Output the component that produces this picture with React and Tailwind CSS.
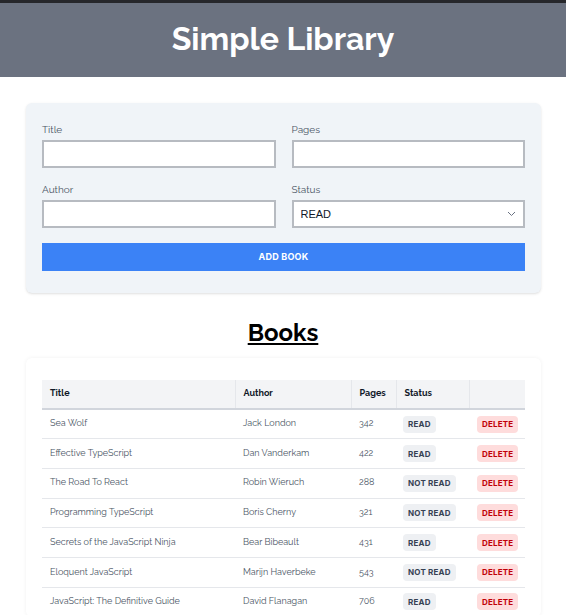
import React from "react";

const books = [
  { title: "Sea Wolf", author: "Jack London", pages: 342, read: true },
  { title: "Effective TypeScript", author: "Dan Vanderkam", pages: 422, read: true },
  { title: "The Road To React", author: "Robin Wieruch", pages: 288, read: false },
  { title: "Programming TypeScript", author: "Boris Cherny", pages: 321, read: false },
  { title: "Secrets of the JavaScript Ninja", author: "Bear Bibeault", pages: 431, read: true },
  { title: "Eloquent JavaScript", author: "Marijn Haverbeke", pages: 543, read: false },
  { title: "JavaScript: The Definitive Guide", author: "David Flanagan", pages: 706, read: true },
];

const inputCls = "w-full h-[28px] bg-white border-2 border-[#b7bbc1] outline-none";

const Field = ({ label, children }) => (
  <div>
    <label className="block text-[10px] leading-[12px] text-gray-600 mb-[4px]">{label}</label>
    {children}
  </div>
);

const App = () => {
  return (
    <div className="min-h-[615px] bg-white font-['Raleway','Lato',sans-serif]">
      {/* Header */}
      <header className="border-t-[3px] border-[#26272b] bg-[#6b7280] h-[77px] flex items-center justify-center">
        <h1 className="text-white text-[32px] font-bold leading-none -mt-[3px]">Simple Library</h1>
      </header>

      {/* Form */}
      <div className="pl-[26px] pr-[25px] pt-[26px]">
        <form className="bg-[#f0f4f8] rounded-md shadow-sm px-4 pt-[21px] pb-[22px]">
          <div className="grid grid-cols-2 gap-x-4 gap-y-[16px]">
            <Field label="Title">
              <input type="text" className={inputCls} />
            </Field>
            <Field label="Pages">
              <input type="text" className={inputCls} />
            </Field>
            <Field label="Author">
              <input type="text" className={inputCls} />
            </Field>
            <Field label="Status">
              <div className="relative">
                <select className={inputCls + " appearance-none px-[7px] text-[11px] text-gray-900 font-['Liberation_Sans',sans-serif]"}>
                  <option>READ</option>
                  <option>NOT READ</option>
                </select>
                <svg className="absolute right-[9px] top-[11px] w-[9px] h-[6px] text-gray-500" viewBox="0 0 9 6" fill="none">
                  <path d="M1 1l3.5 3.5L8 1" stroke="currentColor" strokeWidth="1" />
                </svg>
              </div>
            </Field>
          </div>
          <button type="submit" className="mt-[15px] w-full h-[28px] bg-[#3b82f6] text-white text-[9px] font-bold tracking-wide font-['Inter',sans-serif]">
            ADD BOOK
          </button>
        </form>
      </div>

      {/* Books */}
      <h2 className="text-center text-[24px] font-bold underline text-black mt-[28px] mb-[13px] leading-none">Books</h2>

      <div className="pl-[26px] pr-[25px]">
        <div className="bg-white rounded-md shadow-[0_0_4px_rgba(0,0,0,0.06)] px-4 pt-[22px]">
          <table className="w-full table-fixed border-collapse text-left">
            <thead>
              <tr className="bg-[#f3f4f6] border-b-2 border-gray-300 h-[29px]">
                <th className="w-[193px] px-2 text-[9px] font-bold text-gray-900 border-r border-gray-200">Title</th>
                <th className="w-[116px] px-2 text-[9px] font-bold text-gray-900 border-r border-gray-200">Author</th>
                <th className="w-[45px] px-2 text-[9px] font-bold text-gray-900 border-r border-gray-200">Pages</th>
                <th className="w-[73px] px-2 text-[9px] font-bold text-gray-900 border-r border-gray-200">Status</th>
                <th className="px-2"></th>
              </tr>
            </thead>
            <tbody>
              {books.map((b) => (
                <tr key={b.title} className="border-b border-gray-200 h-[29.7px] text-[9px] text-gray-600">
                  <td className="px-2 whitespace-nowrap">{b.title}</td>
                  <td className="px-2 whitespace-nowrap">{b.author}</td>
                  <td className="px-2">{b.pages}</td>
                  <td className="px-[7px]">
                    <span className="inline-flex items-center h-[17px] bg-[#eef0f3] text-gray-700 text-[8px] font-bold tracking-wide rounded px-[5px] leading-none whitespace-nowrap font-['Inter',sans-serif]">
                      {b.read ? "READ" : "NOT READ"}
                    </span>
                  </td>
                  <td className="px-2">
                    <button className="inline-flex items-center h-[17px] bg-[#fedcdc] text-red-700 text-[8px] font-bold tracking-wide rounded px-[5px] leading-none font-['Inter',sans-serif]">
                      DELETE
                    </button>
                  </td>
                </tr>
              ))}
            </tbody>
          </table>
        </div>
      </div>
    </div>
  );
};

export default App;
